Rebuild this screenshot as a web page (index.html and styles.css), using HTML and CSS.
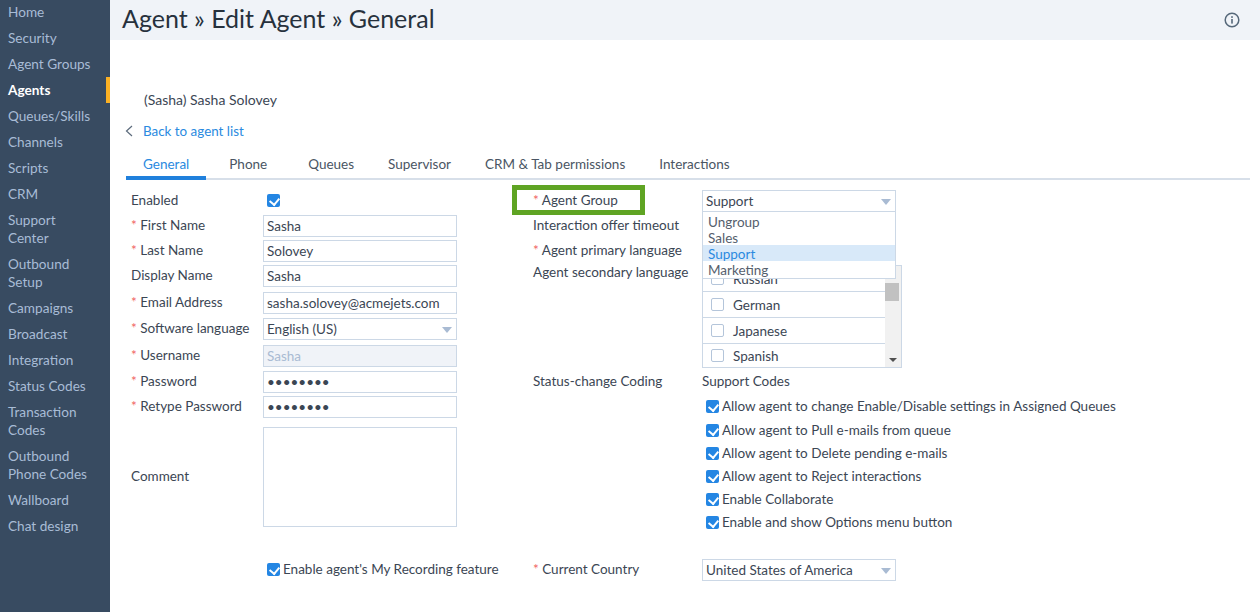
FILE: index.html
```html
<!DOCTYPE html>
<html lang="en">
<head>
    <meta charset="UTF-8">
    <meta name="viewport" content="width=device-width, initial-scale=1.0">
    <title>Agent - Edit Agent - General</title>
    <link rel="stylesheet" href="styles.css">
</head>
<body>
    <nav class="sidebar">
        <a class="nav-item">Home</a>
        <a class="nav-item">Security</a>
        <a class="nav-item">Agent Groups</a>
        <a class="nav-item active">Agents</a>
        <a class="nav-item">Queues/Skills</a>
        <a class="nav-item">Channels</a>
        <a class="nav-item">Scripts</a>
        <a class="nav-item">CRM</a>
        <a class="nav-item">Support Center</a>
        <a class="nav-item">Outbound Setup</a>
        <a class="nav-item">Campaigns</a>
        <a class="nav-item">Broadcast</a>
        <a class="nav-item">Integration</a>
        <a class="nav-item">Status Codes</a>
        <a class="nav-item">Transaction Codes</a>
        <a class="nav-item">Outbound Phone Codes</a>
        <a class="nav-item">Wallboard</a>
        <a class="nav-item">Chat design</a>
    </nav>

    <main class="main">
        <header class="page-header">
            <h1>Agent » Edit Agent » General</h1>
            <svg class="info-icon" width="16" height="16" viewBox="0 0 16 16">
                <circle cx="8" cy="8" r="6.8" fill="none" stroke="#56687a" stroke-width="1.5"/>
                <rect x="7.2" y="7" width="1.6" height="4.6" fill="#56687a"/>
                <rect x="7.2" y="4.2" width="1.6" height="1.7" fill="#56687a"/>
            </svg>
        </header>

        <div class="content">
            <div class="agent-name">(Sasha) Sasha Solovey</div>
            <div class="back-row">
                <svg width="8" height="12" viewBox="0 0 8 12">
                    <path d="M7 1L1.5 6L7 11" fill="none" stroke="#5c6b7c" stroke-width="1.2"/>
                </svg>
                <a class="back-link">Back to agent list</a>
            </div>

            <div class="tabs">
                <a class="tab active">General</a>
                <a class="tab tab-phone">Phone</a>
                <a class="tab">Queues</a>
                <a class="tab">Supervisor</a>
                <a class="tab">CRM &amp; Tab permissions</a>
                <a class="tab">Interactions</a>
            </div>

            <div class="form">
                <div class="col-left">
                    <div class="row"><span class="label">Enabled</span><span class="check check-enabled"></span></div>
                    <div class="row"><span class="label"><i>*</i> First Name</span><input class="input" value="Sasha"></div>
                    <div class="row"><span class="label"><i>*</i> Last Name</span><input class="input" value="Solovey"></div>
                    <div class="row gap-5"><span class="label">Display Name</span><input class="input" value="Sasha"></div>
                    <div class="row gap-4"><span class="label"><i>*</i> Email Address</span><input class="input" value="sasha.solovey@acmejets.com"></div>
                    <div class="row gap-5"><span class="label"><i>*</i> Software language</span><div class="select">English (US)</div></div>
                    <div class="row gap-4"><span class="label"><i>*</i> Username</span><input class="input disabled" value="Sasha" disabled></div>
                    <div class="row"><span class="label"><i>*</i> Password</span><input class="input" type="password" value="password"></div>
                    <div class="row"><span class="label"><i>*</i> Retype Password</span><input class="input" type="password" value="password"></div>
                    <div class="row row-comment"><span class="label">Comment</span><textarea class="textarea"></textarea></div>
                    <div class="row row-recording"><label class="check-label"><span class="check"></span>Enable agent's My Recording feature</label></div>
                </div>

                <div class="col-right">
                    <div class="row">
                        <span class="label label-wide highlighted"><i>*</i> Agent Group</span>
                        <div class="select-wrap">
                            <div class="select">Support</div>
                            <ul class="dropdown">
                                <li>Ungroup</li>
                                <li>Sales</li>
                                <li class="selected">Support</li>
                                <li>Marketing</li>
                            </ul>
                        </div>
                    </div>
                    <div class="row"><span class="label label-wide">Interaction offer timeout</span></div>
                    <div class="row"><span class="label label-wide"><i>*</i> Agent primary language</span></div>
                    <div class="row row-lang">
                        <span class="label label-wide">Agent secondary language</span>
                        <div class="lang-box">
                            <div class="lang-list">
                                <div class="lang-item"><span class="box"></span>Russian</div>
                                <div class="lang-item"><span class="box"></span>German</div>
                                <div class="lang-item"><span class="box"></span>Japanese</div>
                                <div class="lang-item"><span class="box"></span>Spanish</div>
                            </div>
                            <div class="scrollbar"><span class="thumb"></span><span class="arrow-down"></span></div>
                        </div>
                    </div>
                    <div class="row row-status"><span class="label label-wide">Status-change Coding</span><span>Support Codes</span></div>
                    <div class="check-list">
                        <label class="check-label"><span class="check"></span>Allow agent to change Enable/Disable settings in Assigned Queues</label>
                        <label class="check-label"><span class="check"></span>Allow agent to Pull e-mails from queue</label>
                        <label class="check-label"><span class="check"></span>Allow agent to Delete pending e-mails</label>
                        <label class="check-label"><span class="check"></span>Allow agent to Reject interactions</label>
                        <label class="check-label"><span class="check"></span>Enable Collaborate</label>
                        <label class="check-label"><span class="check"></span>Enable and show Options menu button</label>
                    </div>
                    <div class="row row-country"><span class="label label-wide"><i>*</i> Current Country</span><div class="select">United States of America</div></div>
                </div>
            </div>
        </div>
    </main>
</body>
</html>
```

FILE: styles.css
```css
* {
    box-sizing: border-box;
}

body {
    display: flex;
    height: 612px;
    margin: 0;
    overflow: hidden;
    font-family: 'Lato', sans-serif;
    font-size: 13.5px;
    color: #3b4654;
    background: #fff;
}

.sidebar {
    display: flex;
    flex-direction: column;
    flex: 0 0 110px;
    gap: 8px;
    padding-top: 3px;
    background: #384b61;
}

.nav-item {
    padding: 0 16px 0 8px;
    font-size: 13.6px;
    line-height: 18px;
    color: #a8bcd6;
}

.nav-item.active {
    position: relative;
    font-weight: 700;
    color: #fff;
}

.nav-item.active::after {
    content: "";
    position: absolute;
    top: -4px;
    right: 0;
    width: 4px;
    height: 26px;
    background: #fbb124;
}

.main {
    flex: 1;
    min-width: 0;
}

.page-header {
    display: flex;
    align-items: center;
    justify-content: space-between;
    height: 40px;
    padding: 0 20px 0 12px;
    background: #f0f3f8;
}

.page-header h1 {
    margin: -5px 0 0;
    font-size: 25px;
    font-weight: 400;
    color: #27313d;
}

.content {
    padding: 0 10px 0 16px;
}

.agent-name {
    margin: 51px 0 0 18px;
    font-size: 14px;
    line-height: 18px;
}

.back-row {
    display: flex;
    align-items: center;
    gap: 10px;
    height: 18px;
    margin: 13px 0 0 -1px;
}

.back-link {
    font-size: 13.4px;
    color: #2a8ae0;
}

.tabs {
    display: flex;
    height: 26px;
    margin-top: 14px;
    border-bottom: 2px solid #d7dfe9;
}

.tab {
    height: 26px;
    padding: 0 17px;
    line-height: 20px;
    color: #4a5563;
}

.tab.active {
    color: #2a8ae0;
    border-bottom: 4px solid #2080dc;
}

.tab-phone {
    margin: 0 7px 0 6px;
}

.form {
    display: flex;
    margin-top: 10px;
}

.col-left {
    flex: 0 0 407px;
    padding-left: 5px;
}

.col-right {
    flex: 1;
}

.row {
    display: flex;
    align-items: center;
    height: 22px;
    margin-bottom: 3px;
}

.row.gap-4 {
    margin-bottom: 4px;
}

.row.gap-5 {
    margin-bottom: 5px;
}

.label {
    flex: 0 0 132px;
    padding-bottom: 2px;
    white-space: nowrap;
}

.label-wide {
    flex-basis: 169px;
}

.label i {
    font-style: normal;
    color: #f0625f;
}

.highlighted {
    flex: 0 0 123px;
    height: 20px;
    margin: -2px 62px 0 -16px;
    padding: 0 0 0 16px;
    line-height: 20px;
    outline: 5px solid #5fa423;
}

.input,
.select {
    position: relative;
    width: 194px;
    height: 22px;
    padding: 0 3px;
    font: inherit;
    line-height: 20px;
    color: #3b4654;
    background: #fff;
    border: 1px solid #ccd8e6;
}

.input.disabled {
    color: #a9bbd3;
    background: #f0f3f8;
}

.select::after {
    content: "";
    position: absolute;
    top: 8px;
    right: 4px;
    border-top: 6px solid #a9bbd3;
    border-left: 5px solid transparent;
    border-right: 5px solid transparent;
}

.textarea {
    width: 194px;
    height: 100px;
    resize: none;
    border: 1px solid #ccd8e6;
}

.row-comment {
    height: 100px;
    margin: 9px 0 0;
}

.row-recording {
    margin-top: 31px;
    padding-left: 136px;
}

.check {
    flex: none;
    position: relative;
    display: inline-block;
    width: 13px;
    height: 13px;
    background: #2486e3;
    border-radius: 2px;
}

.check::after {
    content: "";
    position: absolute;
    top: 2px;
    left: 4px;
    width: 5px;
    height: 7px;
    border: solid #fff;
    border-width: 0 2px 2px 0;
    transform: rotate(40deg);
}

.check-enabled {
    margin: -2px 0 0 4px;
}

.check-label {
    display: flex;
    align-items: center;
    gap: 3px;
}

.select-wrap {
    position: relative;
}

.dropdown {
    position: absolute;
    top: 22px;
    left: 0;
    z-index: 2;
    width: 194px;
    margin: 0;
    padding: 1px 0;
    list-style: none;
    background: #fff;
    border: 1px solid #ccd8e6;
    border-top: 0;
}

.dropdown li {
    height: 16px;
    padding-left: 5px;
    line-height: 18px;
    color: #55606d;
}

.dropdown li.selected {
    color: #2a8ae0;
    background: #d8e9f9;
}

.row-lang {
    align-items: flex-start;
    height: 103px;
    margin: 1px 0 2px;
}

.row-lang .label {
    margin-top: -1px;
}

.lang-box {
    display: flex;
    width: 200px;
    height: 103px;
    border: 1px solid #ccd8e6;
}

.lang-list {
    display: flex;
    flex: 1;
    flex-direction: column;
    justify-content: flex-end;
    overflow: hidden;
}

.lang-item {
    display: flex;
    flex: none;
    align-items: center;
    gap: 9px;
    height: 26px;
    padding-left: 8px;
    border-bottom: 1px solid #ccd8e6;
}

.lang-item:last-child {
    height: 23px;
    border-bottom: 0;
}

.box {
    width: 13px;
    height: 13px;
    border: 1px solid #b4c5da;
    border-radius: 2px;
}

.scrollbar {
    position: relative;
    flex: 0 0 16px;
    background: #f1f1f1;
}

.thumb {
    position: absolute;
    top: 17px;
    left: 0;
    width: 14px;
    height: 18px;
    background: #c1c1c1;
}

.arrow-down {
    position: absolute;
    bottom: 5px;
    left: 4px;
    border-top: 4px solid #505050;
    border-left: 4px solid transparent;
    border-right: 4px solid transparent;
}

.row-status {
    margin-bottom: 0;
}

.row-status .label {
    padding-bottom: 0;
}

.check-list {
    display: flex;
    flex-direction: column;
    gap: 5px;
    margin: 5px 0 0 173px;
}

.check-list .check-label {
    height: 18px;
}

.check-list .check-label:first-child {
    margin-bottom: 1px;
}

.row-country {
    margin-top: 28px;
}
```
